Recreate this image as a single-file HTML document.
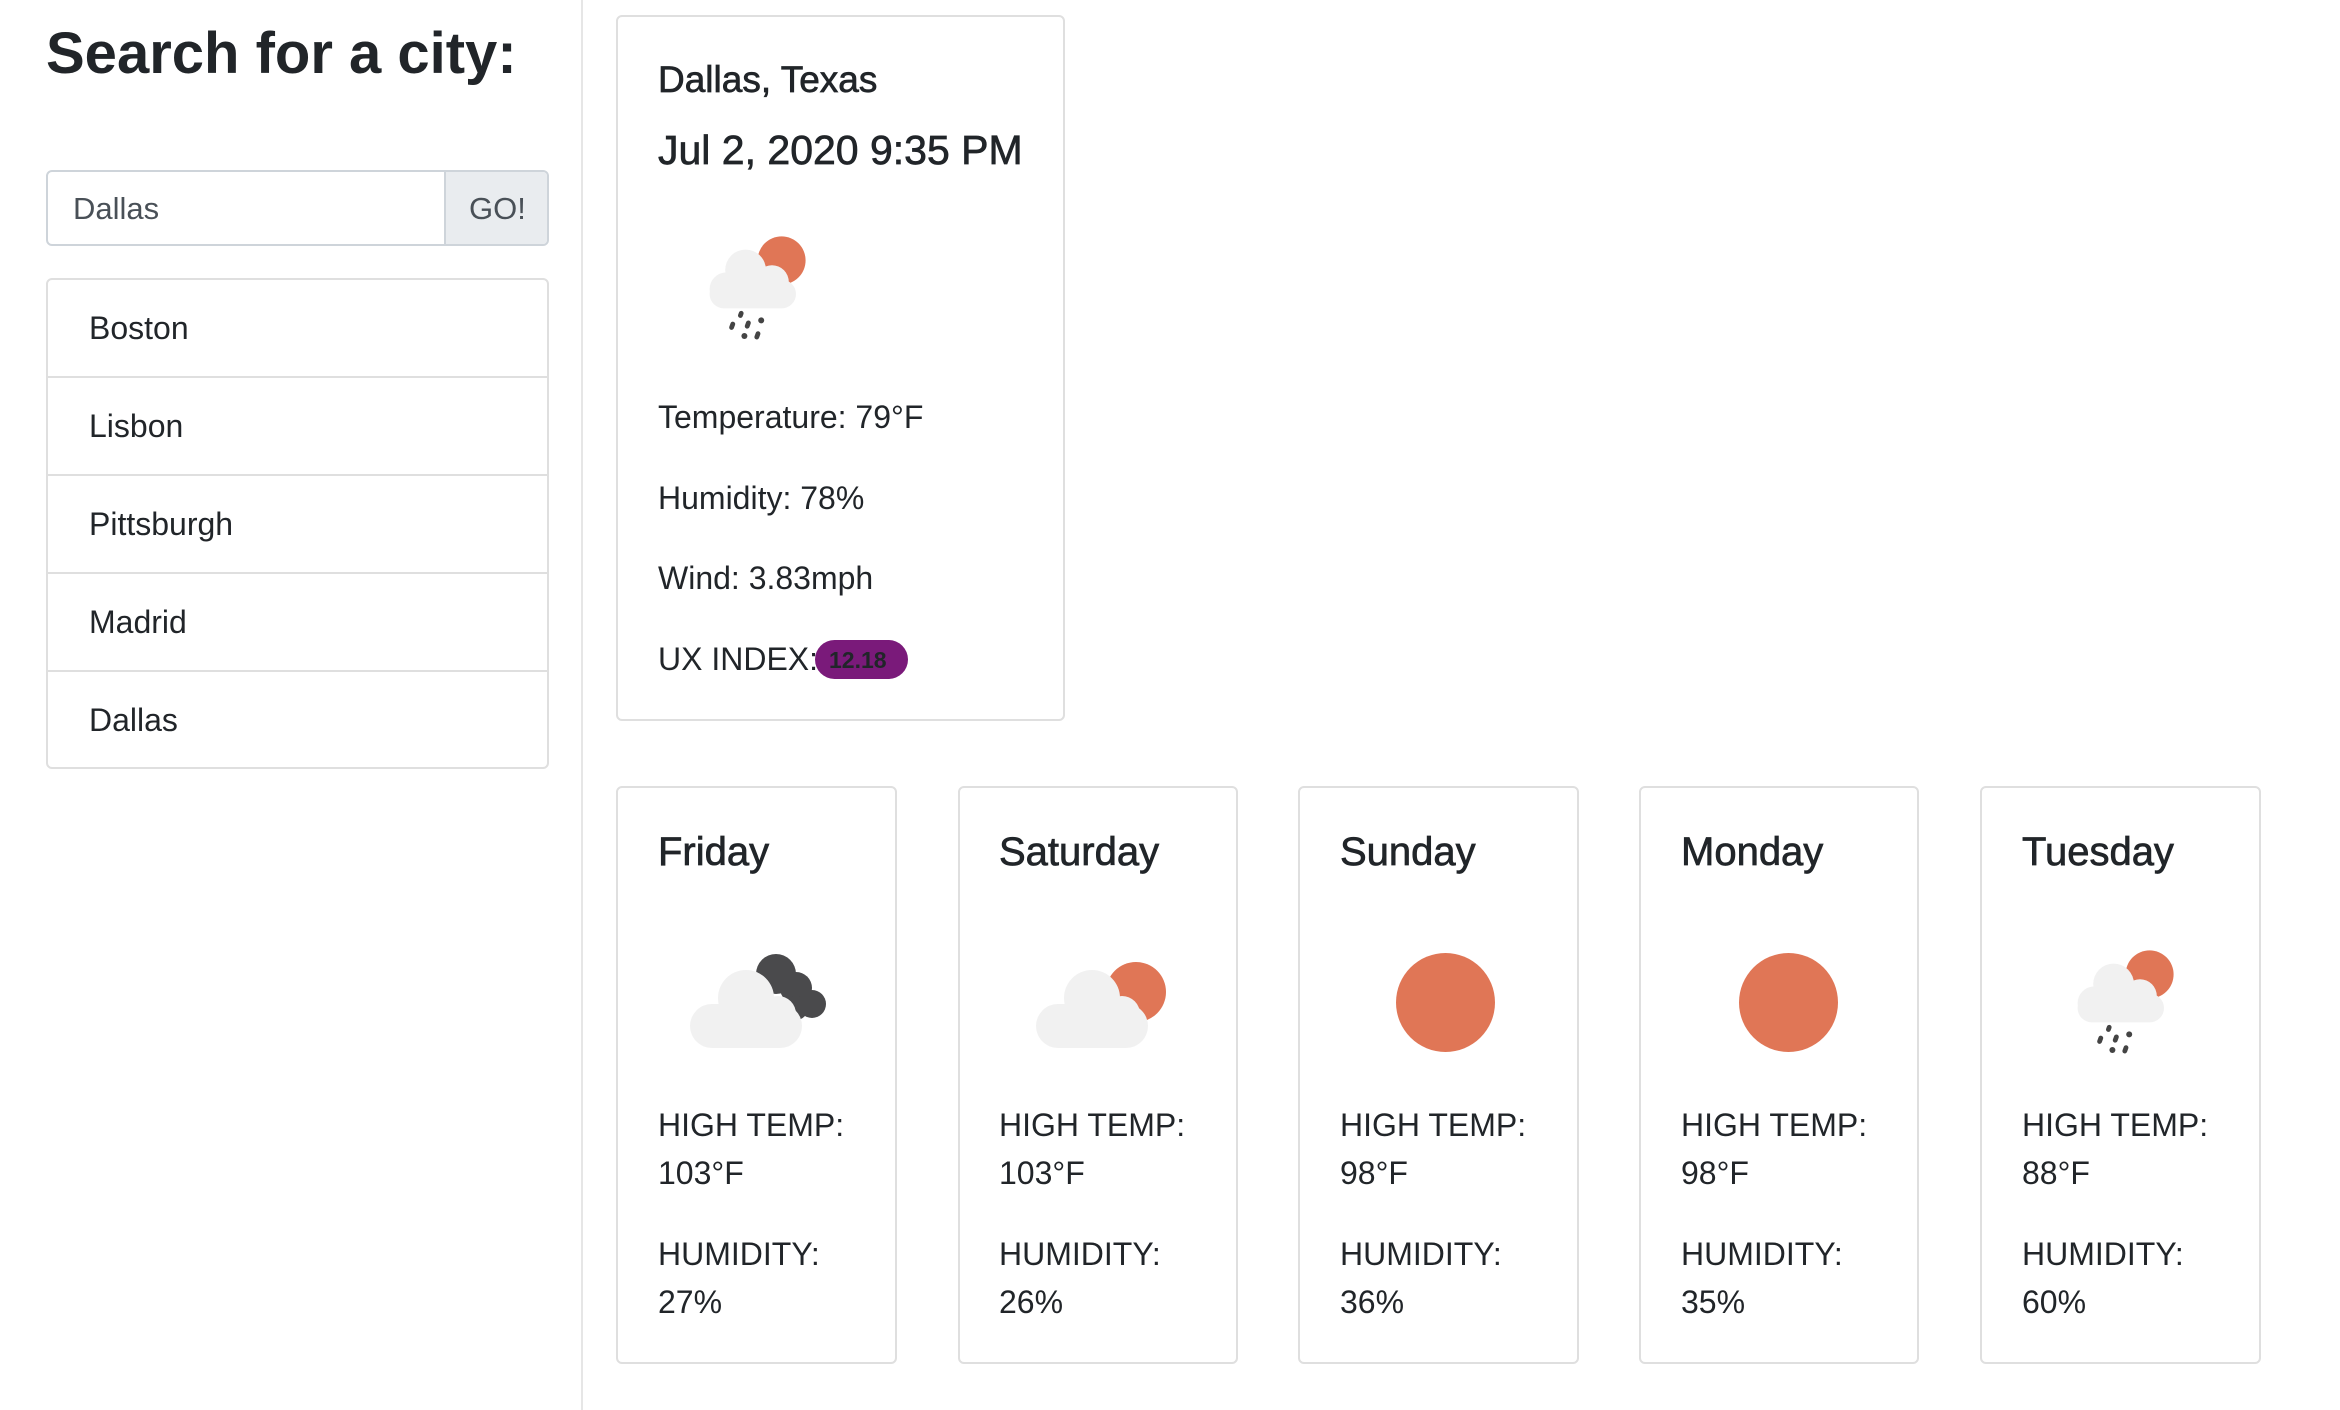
<!DOCTYPE html>
<html><head><meta charset="utf-8"><style>
*{margin:0;padding:0;box-sizing:border-box}
body{width:2340px;height:1410px;background:#fff;font-family:"Liberation Sans",Arial,sans-serif;color:#212529;position:relative;overflow:hidden}
.a{position:absolute}
.t{position:absolute;white-space:nowrap;line-height:1}
.m{-webkit-text-stroke:0.7px #212529}
.card{position:absolute;border:2px solid #dfdfdf;border-radius:6px;background:#fff}
.li{position:absolute;left:46px;width:503px;border:2px solid #dfdfdf;background:#fff}
</style></head><body>
<div class="a" style="left:581px;top:0;width:2px;height:1410px;background:#e6e6e6"></div>
<div class="t" style="left:46px;top:25px;font-size:58px;font-weight:bold;color:#212529">Search for a city:</div>

<div class="a" style="left:46px;top:170px;width:503px;height:76px;border:2px solid #ced4da;border-radius:6px;overflow:hidden">
  <div class="t" style="left:25px;top:21px;font-size:31px;color:#495057">Dallas</div>
  <div class="a" style="left:396px;top:0;width:108px;height:74px;background:#e9ecef;border-left:2px solid #ced4da"></div>
  <div class="t" style="left:421px;top:21px;font-size:31px;color:#495057">GO!</div>
</div>

<div class="li" style="top:278px;height:100px;border-radius:6px 6px 0 0"><div class="t" style="left:41px;top:32px;font-size:32px">Boston</div></div>
<div class="li" style="top:376px;height:100px"><div class="t" style="left:41px;top:32px;font-size:32px">Lisbon</div></div>
<div class="li" style="top:474px;height:100px"><div class="t" style="left:41px;top:32px;font-size:32px">Pittsburgh</div></div>
<div class="li" style="top:572px;height:100px"><div class="t" style="left:41px;top:32px;font-size:32px">Madrid</div></div>
<div class="li" style="top:670px;height:99px;border-radius:0 0 6px 6px"><div class="t" style="left:41px;top:32px;font-size:32px">Dallas</div></div>

<div class="card" style="left:616px;top:15px;width:449px;height:706px"></div>
<div class="t m" style="left:658px;top:61px;font-size:37px">Dallas, Texas</div>
<div class="t m" style="left:658px;top:130px;font-size:41px">Jul 2, 2020 9:35 PM</div>
<svg class="a" style="left:700px;top:234px" width="120" height="120" viewBox="0 0 100 100">
  <circle cx="68" cy="22" r="20" fill="#e07656"/>
  <g fill="#f1f1f1"><circle cx="38" cy="30" r="17"/><circle cx="60" cy="40" r="14"/><circle cx="22" cy="46" r="14"/><rect x="8" y="38" width="72" height="24" rx="12"/></g>
  <g fill="#444"><rect x="32" y="64" width="4" height="6" rx="2" transform="rotate(20 34 67)"/><rect x="25" y="73" width="4" height="7" rx="2" transform="rotate(20 27 76)"/><rect x="38" y="72" width="4" height="7" rx="2" transform="rotate(20 40 75)"/><circle cx="51" cy="72" r="2.5"/><circle cx="37" cy="85" r="2.5"/><rect x="46" y="81" width="4" height="7" rx="2" transform="rotate(20 48 84)"/></g>
</svg>
<div class="t" style="left:658px;top:401px;font-size:32px">Temperature: 79°F</div>
<div class="t" style="left:658px;top:482px;font-size:32px">Humidity: 78%</div>
<div class="t" style="left:658px;top:562px;font-size:32px">Wind: 3.83mph</div>
<div class="t" style="left:658px;top:643px;font-size:32px">UX INDEX:</div>
<div class="a" style="left:815px;top:640px;width:93px;height:39px;border-radius:20px;background:#7a1a7a"></div>
<div class="t" style="left:829px;top:649px;font-size:23px;font-weight:bold;color:#212529">12.18</div>

<div class="card" style="left:616px;top:786px;width:281px;height:578px"></div>
<div class="card" style="left:958px;top:786px;width:280px;height:578px"></div>
<div class="card" style="left:1298px;top:786px;width:281px;height:578px"></div>
<div class="card" style="left:1639px;top:786px;width:280px;height:578px"></div>
<div class="card" style="left:1980px;top:786px;width:281px;height:578px"></div>

<div class="t m" style="left:658px;top:832px;font-size:40px">Friday</div>
<div class="t m" style="left:999px;top:832px;font-size:40px">Saturday</div>
<div class="t m" style="left:1340px;top:832px;font-size:40px">Sunday</div>
<div class="t m" style="left:1681px;top:832px;font-size:40px">Monday</div>
<div class="t m" style="left:2022px;top:832px;font-size:40px">Tuesday</div>

<svg class="a" style="left:686px;top:952px" width="150" height="100" viewBox="0 0 150 100">
  <g fill="#4a4a4c"><circle cx="90" cy="22" r="20"/><circle cx="110" cy="36" r="16"/><circle cx="126" cy="52" r="14"/><circle cx="110" cy="56" r="12"/></g>
  <g fill="#f1f1f1"><circle cx="60" cy="46" r="28"/><circle cx="92" cy="62" r="18"/><rect x="4" y="52" width="112" height="44" rx="22"/></g>
</svg>
<svg class="a" style="left:1032px;top:952px" width="150" height="100" viewBox="0 0 150 100">
  <circle cx="104" cy="40" r="30" fill="#e07656"/>
  <g fill="#f1f1f1"><circle cx="60" cy="46" r="28"/><circle cx="90" cy="62" r="18"/><rect x="4" y="52" width="112" height="44" rx="22"/></g>
</svg>
<div class="a" style="left:1396px;top:953px;width:99px;height:99px;border-radius:50%;background:#e07656"></div>
<div class="a" style="left:1739px;top:953px;width:99px;height:99px;border-radius:50%;background:#e07656"></div>
<svg class="a" style="left:2068px;top:948px" width="120" height="120" viewBox="0 0 100 100">
  <circle cx="68" cy="22" r="20" fill="#e07656"/>
  <g fill="#f1f1f1"><circle cx="38" cy="30" r="17"/><circle cx="60" cy="40" r="14"/><circle cx="22" cy="46" r="14"/><rect x="8" y="38" width="72" height="24" rx="12"/></g>
  <g fill="#444"><rect x="32" y="64" width="4" height="6" rx="2" transform="rotate(20 34 67)"/><rect x="25" y="73" width="4" height="7" rx="2" transform="rotate(20 27 76)"/><rect x="38" y="72" width="4" height="7" rx="2" transform="rotate(20 40 75)"/><circle cx="51" cy="72" r="2.5"/><circle cx="37" cy="85" r="2.5"/><rect x="46" y="81" width="4" height="7" rx="2" transform="rotate(20 48 84)"/></g>
</svg>

<div class="t" style="left:658px;top:1109px;font-size:32px">HIGH TEMP:</div>
<div class="t" style="left:658px;top:1157px;font-size:32px">103°F</div>
<div class="t" style="left:658px;top:1238px;font-size:32px">HUMIDITY:</div>
<div class="t" style="left:658px;top:1286px;font-size:32px">27%</div>

<div class="t" style="left:999px;top:1109px;font-size:32px">HIGH TEMP:</div>
<div class="t" style="left:999px;top:1157px;font-size:32px">103°F</div>
<div class="t" style="left:999px;top:1238px;font-size:32px">HUMIDITY:</div>
<div class="t" style="left:999px;top:1286px;font-size:32px">26%</div>

<div class="t" style="left:1340px;top:1109px;font-size:32px">HIGH TEMP:</div>
<div class="t" style="left:1340px;top:1157px;font-size:32px">98°F</div>
<div class="t" style="left:1340px;top:1238px;font-size:32px">HUMIDITY:</div>
<div class="t" style="left:1340px;top:1286px;font-size:32px">36%</div>

<div class="t" style="left:1681px;top:1109px;font-size:32px">HIGH TEMP:</div>
<div class="t" style="left:1681px;top:1157px;font-size:32px">98°F</div>
<div class="t" style="left:1681px;top:1238px;font-size:32px">HUMIDITY:</div>
<div class="t" style="left:1681px;top:1286px;font-size:32px">35%</div>

<div class="t" style="left:2022px;top:1109px;font-size:32px">HIGH TEMP:</div>
<div class="t" style="left:2022px;top:1157px;font-size:32px">88°F</div>
<div class="t" style="left:2022px;top:1238px;font-size:32px">HUMIDITY:</div>
<div class="t" style="left:2022px;top:1286px;font-size:32px">60%</div>
</body></html>
